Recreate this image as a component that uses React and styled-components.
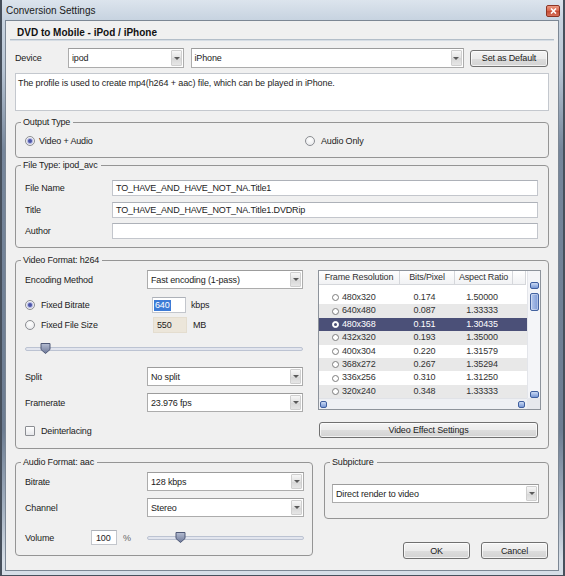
import React from 'react';
import styled, { createGlobalStyle } from 'styled-components';

const GlobalStyle = createGlobalStyle`
  html, body {
    margin: 0;
    padding: 0;
  }

  body {
    font-family: "Liberation Sans", Arial, sans-serif;
    font-size: 9px;
    letter-spacing: -0.15px;
    color: #1c1c1c;
    background: #ffffff;
  }

  * {
    box-sizing: border-box;
  }
`;

const Window = styled.div`
  width: 565px;
  height: 576px;
  display: flex;
  flex-direction: column;
  border: solid #47505c;
  border-width: 0 2px 1px 2px;
  background: linear-gradient(
    180deg,
    #cfd9e4 0,
    #b8c5d4 70px,
    #76869b 150px,
    #6d7d92 430px,
    #a6b3c3 510px,
    #d6dee7 560px
  );
`;

const TitleBar = styled.div`
  height: 20px;
  flex: none;
  display: flex;
  align-items: center;
  justify-content: space-between;
  padding: 0 3px 0 4px;
  background: linear-gradient(180deg, #dce4ed, #c7d3e0);
`;

const TitleText = styled.span`
  font-size: 10px;
  letter-spacing: 0;
  color: #1a1a1a;
`;

const CloseButton = styled.div`
  width: 14px;
  height: 12px;
  margin-top: 2px;
  display: flex;
  align-items: center;
  justify-content: center;
  border: 1px solid #8c3424;
  border-radius: 2px;
  background: linear-gradient(180deg, #eb9a82 0, #d9634a 50%, #c24a32 51%, #d8705a 100%);
`;

const Client = styled.div`
  flex: 1;
  margin: 0 4px 4px 3px;
  padding: 6px 9px 0 9px;
  border: 1px solid #7c8794;
  background: #f0f0f0;
  display: flex;
  flex-direction: column;
`;

const Heading = styled.div`
  font-size: 10px;
  font-weight: bold;
  letter-spacing: 0;
  line-height: 12px;
  padding-left: 2px;
  color: #111;
`;

const Separator = styled.div`
  height: 2px;
  margin: 0 -5px;
  background: #b3bec9;
  border-bottom: 1px solid #d6dde4;
`;

const DeviceRow = styled.div`
  margin-top: 7px;
  display: grid;
  grid-template-columns: 46.5px 116px 273px 78px;
  column-gap: 6.5px;
  align-items: center;
  height: 20px;
`;

const Label = styled.span`
  white-space: nowrap;
  color: ${(p) => p.$color || '#222'};
  padding-left: ${(p) => p.$pl || 0}px;
`;

const ComboBox = styled.div`
  width: ${(p) => (p.$width ? `${p.$width}px` : '100%')};
  height: ${(p) => p.$height || 19}px;
  display: flex;
  align-items: stretch;
  background: #ffffff;
  border: 1px solid #acacac;
  border-top-color: #9c9c9c;
`;

const ComboText = styled.span`
  flex: 1;
  display: flex;
  align-items: center;
  padding-left: 3px;
  white-space: nowrap;
  overflow: hidden;
`;

const ComboButton = styled.span`
  width: 11px;
  margin: 1px;
  display: flex;
  align-items: center;
  justify-content: center;
  border: 1px solid #cfcfcf;
  border-radius: 1px;
  background: linear-gradient(180deg, #f7f7f7, #e2e2e2 50%, #d6d6d6 51%, #e6e6e6);
`;

const ArrowDown = styled.span`
  width: 0;
  height: 0;
  border-left: 3px solid transparent;
  border-right: 3px solid transparent;
  border-top: 3px solid #5a5a5a;
`;

const Button = styled.div`
  width: ${(p) => (p.$width ? `${p.$width}px` : '100%')};
  height: ${(p) => p.$height || 17}px;
  display: flex;
  align-items: center;
  justify-content: center;
  border: 1px solid #707070;
  border-radius: 3px;
  background: linear-gradient(180deg, #f4f4f4 0, #ebebeb 50%, #dddddd 51%, #d3d3d3 100%);
  box-shadow: inset 0 0 0 1px rgba(255, 255, 255, 0.7);
  color: #1c1c1c;
  white-space: nowrap;
`;

const DescBox = styled.div`
  margin-top: 5px;
  height: 38px;
  padding: 4px 2px;
  background: #ffffff;
  border: 1px solid #c4c8ce;
  letter-spacing: -0.1px;
`;

const Group = styled.div`
  position: relative;
  margin-top: ${(p) => p.$mt || 0}px;
  padding: ${(p) => p.$pad};
  border: 1px solid #959595;
  border-radius: 4px;
`;

const Legend = styled.span`
  position: absolute;
  top: -6px;
  left: 5px;
  padding: 0 3px 0 2px;
  line-height: 11px;
  background: #f0f0f0;
  color: #222;
  white-space: nowrap;
`;

const OutputRow = styled.div`
  height: 14px;
  display: grid;
  grid-template-columns: 280px auto;
  align-items: center;
`;

const Option = styled.label`
  display: flex;
  align-items: center;
  gap: ${(p) => p.$gap || 4}px;
  white-space: nowrap;
  color: #222;
`;

const RadioDot = styled.span`
  width: 10px;
  height: 10px;
  flex: none;
  border-radius: 50%;
  border: 1px solid #8b8d92;
  background: radial-gradient(circle at 50% 35%, #ffffff 0, #e9eaec 80%);
  display: flex;
  align-items: center;
  justify-content: center;

  &::after {
    content: '';
    width: 4px;
    height: 4px;
    border-radius: 50%;
    background: ${(p) => (p.$checked ? '#4b55a6' : 'transparent')};
    box-shadow: ${(p) => (p.$checked ? '0 0 0 1px #b4b8e4' : 'none')};
  }
`;

const CheckBox = styled.span`
  width: 10px;
  height: 10px;
  flex: none;
  border: 1px solid #8b8d92;
  border-radius: 1px;
  background: linear-gradient(180deg, #ffffff, #e6e7ea);
`;

const FormGrid = styled.div`
  display: grid;
  grid-template-columns: 87px 1fr;
  row-gap: 5.5px;
  align-items: center;
`;

const TextInput = styled.div`
  width: 100%;
  height: ${(p) => p.$height || 16}px;
  display: flex;
  align-items: center;
  padding-left: ${(p) => (p.$pl !== undefined ? p.$pl : 3)}px;
  background: ${(p) => p.$bg || '#ffffff'};
  border: 1px solid ${(p) => p.$line || '#c3c6cc'};
  border-top-color: ${(p) => p.$line || '#adb1b8'};
  white-space: nowrap;
`;

const Selected = styled.span`
  background: #3d7bd6;
  color: #ffffff;
  padding: 0 1px;
  line-height: 11px;
`;

const VideoBody = styled.div`
  display: grid;
  grid-template-columns: 278px 1fr;
  column-gap: 15px;
`;

const Stack = styled.div`
  display: flex;
  flex-direction: column;
`;

const ControlRow = styled.div`
  margin-top: ${(p) => p.$mt || 0}px;
  height: ${(p) => p.$h || 19}px;
  display: grid;
  grid-template-columns: ${(p) => p.$cols || '122px 1fr'};
  column-gap: ${(p) => p.$gap || 0}px;
  align-items: center;
`;

const SliderRow = styled.div`
  margin-top: ${(p) => p.$mt || 0}px;
  height: 12px;
  display: flex;
  align-items: center;
`;

const SliderTrack = styled.div`
  position: relative;
  flex: 1;
  height: 4px;
  background: #e2e5ee;
  border: 1px solid #bcc3d2;
  border-radius: 2px;
`;

const SliderThumb = styled.svg`
  position: absolute;
  top: -5px;
  width: 11px;
  height: 11px;
  margin-left: -5.5px;
`;

const ListView = styled.div`
  height: 140px;
  display: grid;
  grid-template-columns: 1fr 13px;
  grid-template-rows: 1fr 11px;
  border: 1px solid #8d939b;
  background: #ffffff;
`;

const ListGrid = styled.div`
  display: grid;
  grid-template-columns: 81px 55px 58px 13px;
`;

const HeaderCell = styled.div`
  height: 14px;
  line-height: 13px;
  text-align: center;
  white-space: nowrap;
  color: #333;
  border-right: 1px solid #d5d7db;
  border-bottom: 1px solid #d5d7db;
  background: linear-gradient(180deg, #ffffff, #f1f2f4);
`;

const ListBody = styled.div`
  padding-top: 6px;
`;

const ListRow = styled(ListGrid)`
  height: 13.4px;
  line-height: 13.4px;
  background: ${(p) => (p.$selected ? '#4b5078' : p.$alt ? '#e8e8e8' : '#ffffff')};
  color: ${(p) => (p.$selected ? '#ffffff' : '#333')};
`;

const ResCell = styled.div`
  display: flex;
  align-items: center;
  gap: 3px;
  padding-left: 13px;
`;

const NumCell = styled.div`
  text-align: center;
  padding-right: ${(p) => p.$pr || 0}px;
`;

const RowRadio = styled.span`
  width: 7px;
  height: 7px;
  border-radius: 50%;
  border: 1px solid ${(p) => (p.$selected ? '#ffffff' : '#7d7d7d')};
  background: #ffffff;
  display: flex;
  align-items: center;
  justify-content: center;

  &::after {
    content: '';
    width: 3px;
    height: 3px;
    border-radius: 50%;
    background: ${(p) => (p.$selected ? '#4b5078' : 'transparent')};
  }
`;

const VScroll = styled.div`
  display: flex;
  flex-direction: column;
  align-items: center;
  padding-top: 11px;
  background: #f4f5f8;
  border-left: 1px solid #e3e5ea;
`;

const ScrollBtn = styled.span`
  width: ${(p) => p.$w || 9}px;
  height: ${(p) => p.$h || 7}px;
  flex: none;
  border: 1px solid #3f5f9f;
  border-radius: 2px;
  background: linear-gradient(180deg, #cbdaf4, #7898d6);
`;

const ScrollThumb = styled.span`
  width: 9px;
  height: 18px;
  margin-top: 4px;
  border: 1px solid #42629f;
  border-radius: 2px;
  background: linear-gradient(90deg, #b5c8ec, #7d9ad6);
  box-shadow: inset 0 0 0 1px rgba(255, 255, 255, 0.35);
`;

const Spacer = styled.span`
  flex: 1;
`;

const HScroll = styled.div`
  display: flex;
  align-items: center;
  justify-content: space-between;
  padding: 0 2px 0 1px;
  background: #eef0f4;
  border-top: 1px solid #e0e2e7;
`;

const Corner = styled.div`
  background: #e6e8ed;
`;

const EffectRow = styled.div`
  margin-top: 12px;
  padding: 0 3px 0 1px;
`;

const BottomRow = styled.div`
  margin-top: 13px;
  display: grid;
  grid-template-columns: 298px 1fr;
  column-gap: 11px;
  align-items: start;
`;

const ButtonRow = styled.div`
  margin-top: 23px;
  padding-right: 1px;
  display: flex;
  justify-content: flex-end;
  gap: 11px;
`;

const Combo = ({ value, width, height }) => (
  <ComboBox $width={width} $height={height}>
    <ComboText>{value}</ComboText>
    <ComboButton>
      <ArrowDown />
    </ComboButton>
  </ComboBox>
);

const Slider = ({ value }) => (
  <SliderTrack>
    <SliderThumb viewBox="0 0 11 11" style={{ left: `${value}%` }}>
      <defs>
        <linearGradient id="thumbFill" x1="0" y1="0" x2="0" y2="1">
          <stop offset="0" stopColor="#b5bdd2" />
          <stop offset="1" stopColor="#6d7898" />
        </linearGradient>
      </defs>
      <path d="M1 0.5 H10 V6.5 L5.5 10.5 L1 6.5 Z" fill="url(#thumbFill)" stroke="#4f5977" strokeWidth="1" />
    </SliderThumb>
  </SliderTrack>
);

const resolutions = [
  ['480x320', '0.174', '1.50000'],
  ['640x480', '0.087', '1.33333'],
  ['480x368', '0.151', '1.30435'],
  ['432x320', '0.193', '1.35000'],
  ['400x304', '0.220', '1.31579'],
  ['368x272', '0.267', '1.35294'],
  ['336x256', '0.310', '1.31250'],
  ['320x240', '0.348', '1.33333'],
];

const App = () => {
  return (
    <>
      <GlobalStyle />
      <Window>
        <TitleBar>
          <TitleText>Conversion Settings</TitleText>
          <CloseButton>
            <svg width="7" height="6" viewBox="0 0 7 6">
              <path d="M1 0.5 L6 5.5 M6 0.5 L1 5.5" stroke="#ffffff" strokeWidth="1.6" />
            </svg>
          </CloseButton>
        </TitleBar>

        <Client>
          <Heading>DVD to Mobile - iPod / iPhone</Heading>
          <Separator />

          <DeviceRow>
            <Label>Device</Label>
            <Combo value="ipod" height={20} />
            <Combo value="iPhone" height={20} />
            <Button>Set as Default</Button>
          </DeviceRow>

          <DescBox>The profile is used to create mp4(h264 + aac) file, which can be played in iPhone.</DescBox>

          <Group $mt={11} $pad="11px 9px 9px 9px">
            <Legend>Output Type</Legend>
            <OutputRow>
              <Option>
                <RadioDot $checked />
                Video + Audio
              </Option>
              <Option $gap={6}>
                <RadioDot />
                Audio Only
              </Option>
            </OutputRow>
          </Group>

          <Group $mt={7} $pad="14px 10px 8px 9px">
            <Legend>File Type: ipod_avc</Legend>
            <FormGrid>
              <Label>File Name</Label>
              <TextInput>TO_HAVE_AND_HAVE_NOT_NA.Title1</TextInput>
              <Label>Title</Label>
              <TextInput>TO_HAVE_AND_HAVE_NOT_NA.Title1.DVDRip</TextInput>
              <Label>Author</Label>
              <TextInput />
            </FormGrid>
          </Group>

          <Group $mt={12} $pad="9px 7px 10px 9px">
            <Legend>Video Format: h264</Legend>
            <VideoBody>
              <Stack>
                <ControlRow>
                  <Label>Encoding Method</Label>
                  <Combo value="Fast encoding (1-pass)" />
                </ControlRow>
                <ControlRow $mt={8} $h={16} $cols="122px 34px auto" $gap={5}>
                  <Option $gap={6}>
                    <RadioDot $checked />
                    Fixed Bitrate
                  </Option>
                  <TextInput $pl={1}>
                    <Selected>640</Selected>
                  </TextInput>
                  <Label>kbps</Label>
                </ControlRow>
                <ControlRow $mt={4} $h={16} $cols="122px 34px auto" $gap={6}>
                  <Option $gap={6}>
                    <RadioDot />
                    Fixed File Size
                  </Option>
                  <TextInput $bg="#ece6da" $line="#e4ddcf">550</TextInput>
                  <Label>MB</Label>
                </ControlRow>
                <SliderRow $mt={10}>
                  <Slider value={7} />
                </SliderRow>
                <ControlRow $mt={12}>
                  <Label>Split</Label>
                  <Combo value="No split" />
                </ControlRow>
                <ControlRow $mt={7}>
                  <Label>Framerate</Label>
                  <Combo value="23.976 fps" />
                </ControlRow>
                <ControlRow $mt={12} $h={13} $cols="1fr">
                  <Option $gap={6}>
                    <CheckBox />
                    Deinterlacing
                  </Option>
                </ControlRow>
              </Stack>

              <Stack>
                <ListView>
                  <div>
                    <ListGrid>
                      <HeaderCell>Frame Resolution</HeaderCell>
                      <HeaderCell>Bits/Pixel</HeaderCell>
                      <HeaderCell>Aspect Ratio</HeaderCell>
                      <HeaderCell />
                    </ListGrid>
                    <ListBody>
                      {resolutions.map(([res, bits, ratio], i) => {
                        const selected = i === 2;
                        return (
                          <ListRow key={res} $alt={i % 2 === 1} $selected={selected}>
                            <ResCell>
                              <RowRadio $selected={selected} />
                              {res}
                            </ResCell>
                            <NumCell $pr={6}>{bits}</NumCell>
                            <NumCell $pr={4}>{ratio}</NumCell>
                            <span />
                          </ListRow>
                        );
                      })}
                    </ListBody>
                  </div>
                  <VScroll>
                    <ScrollBtn />
                    <ScrollThumb />
                    <Spacer />
                    <ScrollBtn />
                  </VScroll>
                  <HScroll>
                    <ScrollBtn $w={7} $h={7} />
                    <ScrollBtn $w={7} $h={7} />
                  </HScroll>
                  <Corner />
                </ListView>
                <EffectRow>
                  <Button $height={16}>Video Effect Settings</Button>
                </EffectRow>
              </Stack>
            </VideoBody>
          </Group>

          <BottomRow>
            <Group $pad="9px 8px 10px 9px">
              <Legend>Audio Format: aac</Legend>
              <ControlRow>
                <Label>Bitrate</Label>
                <Combo value="128 kbps" />
              </ControlRow>
              <ControlRow $mt={7}>
                <Label>Channel</Label>
                <Combo value="Stereo" />
              </ControlRow>
              <ControlRow $mt={13} $h={15} $cols="66px 26px 30px 1fr">
                <Label>Volume</Label>
                <TextInput $height={15} $pl={4}>100</TextInput>
                <Label $pl={6} $color="#666">%</Label>
                <SliderRow>
                  <Slider value={21} />
                </SliderRow>
              </ControlRow>
            </Group>

            <Stack>
              <Group $pad="21px 9px 15px 7px">
                <Legend>Subpicture</Legend>
                <Combo value="Direct render to video" />
              </Group>
              <ButtonRow>
                <Button $width={67}>OK</Button>
                <Button $width={67}>Cancel</Button>
              </ButtonRow>
            </Stack>
          </BottomRow>
        </Client>
      </Window>
    </>
  );
};

export default App;
